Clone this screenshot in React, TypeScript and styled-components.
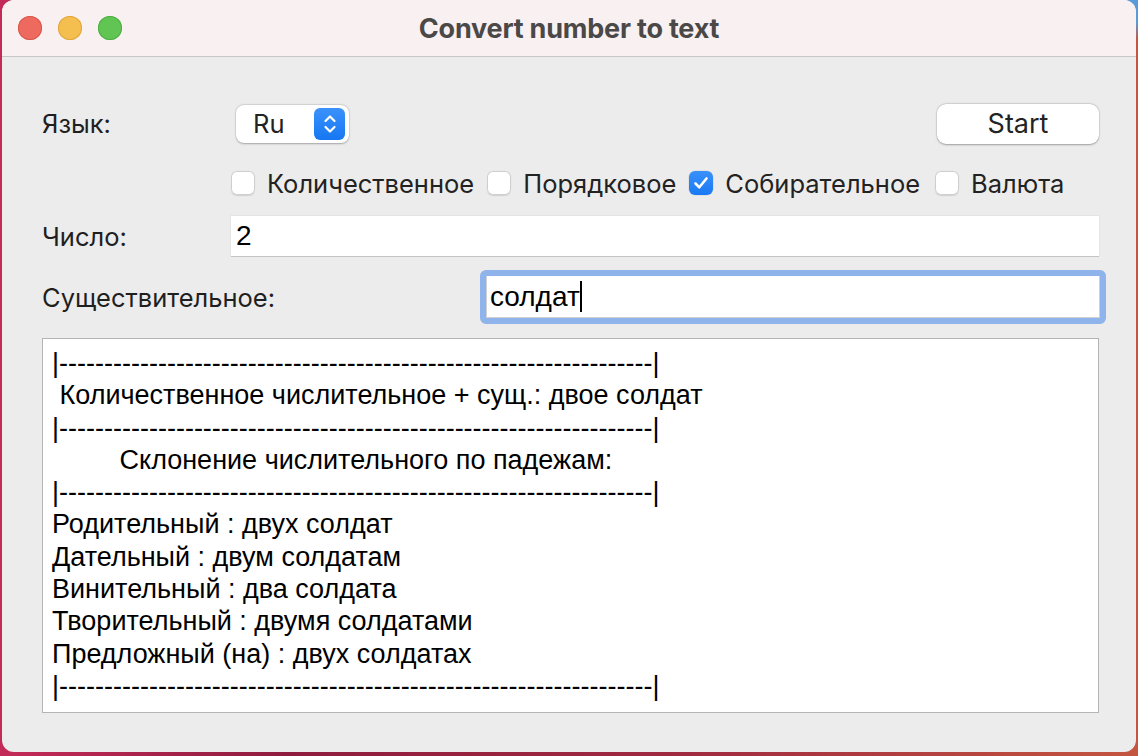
import React from "react";
import styled, { createGlobalStyle } from "styled-components";

const Global = createGlobalStyle`
  html, body { margin: 0; padding: 0; }
  body {
    width: 1138px;
    height: 756px;
    overflow: hidden;
    background:
      radial-gradient(circle at 100% 0%, #5a9ad8 0, #5a9ad8 22px, transparent 40px),
      linear-gradient(90deg, #c42a58 0%, #8f1c3e 25%, #a02a40 60%, #c4553f 100%);
    font-family: "Inter", "Liberation Sans", sans-serif;
  }
  #root { padding: 0 2px 4px 2px; }
`;

const Window = styled.div`
  width: 1134px;
  height: 752px;
  border-radius: 12px;
  overflow: hidden;
  background: #ececec;
  display: flex;
  flex-direction: column;
`;

const TitleBar = styled.div`
  height: 56px;
  flex: none;
  background: #f9f1f1;
  border-bottom: 1px solid #c9c6c6;
  display: grid;
  grid-template-columns: 1fr auto 1fr;
  align-items: center;
`;

const Lights = styled.div`
  display: flex;
  gap: 16px;
  padding-left: 16px;
`;

const Light = styled.span<{ $c: string; $b: string }>`
  width: 24px;
  height: 24px;
  border-radius: 50%;
  background: ${(p) => p.$c};
  box-shadow: inset 0 0 0 1px ${(p) => p.$b};
`;

const Title = styled.div`
  font-size: 27px;
  font-weight: 700;
  color: #4b4848;
  letter-spacing: -0.2px;
`;

const Content = styled.div`
  display: flex;
  flex-direction: column;
  padding: 46px 37px 0 40px;
`;

const Row1 = styled.div`
  display: flex;
  align-items: center;
  height: 41px;
`;

const Label = styled.div<{ $w: number }>`
  width: ${(p) => p.$w}px;
  flex: none;
  font-size: 25.5px;
  color: #1f1f1f;
`;

const Select = styled.div`
  width: 113px;
  height: 38px;
  box-sizing: border-box;
  background: #fff;
  border-radius: 8px;
  box-shadow: 0 0.5px 2px rgba(0, 0, 0, 0.28), 0 0 0 0.5px rgba(0, 0, 0, 0.08);
  display: flex;
  align-items: center;
  justify-content: space-between;
  padding: 0 4px 0 17px;
  font-size: 25.5px;
  color: #222;
`;

const Stepper = styled.div`
  width: 31px;
  height: 32px;
  border-radius: 6px;
  background: linear-gradient(#3b92fb, #1677f2);
  display: flex;
  align-items: center;
  justify-content: center;
`;

const Spacer = styled.div`
  flex: 1;
`;

const Button = styled.div`
  width: 162px;
  height: 40px;
  background: #fff;
  border-radius: 9px;
  box-shadow: 0 0.5px 2px rgba(0, 0, 0, 0.3), 0 0 0 0.5px rgba(0, 0, 0, 0.08);
  display: flex;
  align-items: center;
  justify-content: center;
  font-size: 27px;
  color: #232323;
`;

const ChecksRow = styled.div`
  display: flex;
  align-items: center;
  height: 24px;
  margin-top: 27px;
  padding-left: 189px;
`;

const Check = styled.label<{ $gap: number }>`
  display: flex;
  align-items: center;
  gap: 12px;
  margin-right: ${(p) => p.$gap}px;
  font-size: 25.5px;
  color: #222;
`;

const Box = styled.span<{ $on?: boolean }>`
  width: 24px;
  height: 24px;
  box-sizing: border-box;
  border-radius: 6px;
  background: ${(p) => (p.$on ? "linear-gradient(#3a91fb, #1a79f3)" : "#fff")};
  box-shadow: ${(p) =>
    p.$on
      ? "0 0 0 0.5px rgba(0,0,0,0.1)"
      : "inset 0 0 0 1px #cfcfcf, 0 0.5px 1px rgba(0,0,0,0.12)"};
  display: flex;
  align-items: center;
  justify-content: center;
`;

const FieldRow = styled.div<{ $mt: number; $h: number }>`
  display: flex;
  align-items: center;
  height: ${(p) => p.$h}px;
  margin-top: ${(p) => p.$mt}px;
`;

const Input = styled.div`
  flex: 1;
  height: 40px;
  box-sizing: border-box;
  background: #fff;
  box-shadow: 0 1px 0 #c4c4c4, 0 0 0 0.5px #dcdcdc;
  display: flex;
  align-items: center;
  padding-left: 5px;
  font-family: "Liberation Sans", Arial, sans-serif;
  font-size: 28px;
  color: #000;
`;

const FocusRing = styled.div`
  flex: 1;
  margin-right: -7px;
  height: 54px;
  box-sizing: border-box;
  border: 6px solid #8fb4ec;
  border-radius: 6px;
  display: flex;
`;

const FocusInner = styled.div`
  flex: 1;
  background: #fff;
  border: 1px solid #d0d0d0;
  border-top: none;
  display: flex;
  align-items: center;
  padding-left: 3px;
  font-family: "Liberation Sans", Arial, sans-serif;
  font-size: 28px;
  color: #000;
`;

const Caret = styled.span`
  display: inline-block;
  width: 2px;
  height: 31px;
  background: #000;
`;

const Output = styled.div`
  margin-top: 14px;
  height: 375px;
  box-sizing: border-box;
  background: #fff;
  border: 1px solid #b4b4b4;
  padding: 8px 9px 0;
  font-family: "Liberation Sans", Arial, sans-serif;
  font-size: 27px;
  line-height: 32.3px;
  color: #000;
  white-space: pre;
`;

const Line = styled.div``;

const dash = "|" + "-".repeat(66) + "|";
const lines = [
  dash,
  " Количественное числительное + сущ.: двое солдат",
  dash,
  "         Склонение числительного по падежам:",
  dash,
  "Родительный : двух солдат",
  "Дательный : двум солдатам",
  "Винительный : два солдата",
  "Творительный : двумя солдатами",
  "Предложный (на) : двух солдатах",
  dash,
];

const CheckMark = () => (
  <svg width="18" height="18" viewBox="0 0 18 18">
    <path d="M3.5 9.5 L7.3 13.3 L14.5 4.5" fill="none" stroke="#fff" strokeWidth="2.6" strokeLinecap="round" strokeLinejoin="round" />
  </svg>
);

const StepIcon = () => (
  <svg width="16" height="24" viewBox="0 0 16 24">
    <path d="M3.5 9 L8 4.5 L12.5 9" fill="none" stroke="#fff" strokeWidth="2.2" strokeLinecap="round" strokeLinejoin="round" />
    <path d="M3.5 15 L8 19.5 L12.5 15" fill="none" stroke="#fff" strokeWidth="2.2" strokeLinecap="round" strokeLinejoin="round" />
  </svg>
);

export default function App() {
  return (
    <>
      <Global />
      <Window>
        <TitleBar>
          <Lights>
            <Light $c="#ee6a5f" $b="#d9574d" />
            <Light $c="#f5bf4f" $b="#dea63c" />
            <Light $c="#61c554" $b="#4ead43" />
          </Lights>
          <Title>Convert number to text</Title>
          <span />
        </TitleBar>
        <Content>
          <Row1>
            <Label $w={194}>Язык:</Label>
            <Select>
              Ru
              <Stepper>
                <StepIcon />
              </Stepper>
            </Select>
            <Spacer />
            <Button>Start</Button>
          </Row1>
          <ChecksRow>
            <Check $gap={13}>
              <Box />
              Количественное
            </Check>
            <Check $gap={13}>
              <Box />
              Порядковое
            </Check>
            <Check $gap={15}>
              <Box $on>
                <CheckMark />
              </Box>
              Собирательное
            </Check>
            <Check $gap={0}>
              <Box />
              Валюта
            </Check>
          </ChecksRow>
          <FieldRow $mt={21} $h={40}>
            <Label $w={189}>Число:</Label>
            <Input>2</Input>
          </FieldRow>
          <FieldRow $mt={14} $h={54}>
            <Label $w={438}>Существительное:</Label>
            <FocusRing>
              <FocusInner>
                солдат
                <Caret />
              </FocusInner>
            </FocusRing>
          </FieldRow>
          <Output>
            {lines.map((l, i) => (
              <Line key={i}>{l}</Line>
            ))}
          </Output>
        </Content>
      </Window>
    </>
  );
}
